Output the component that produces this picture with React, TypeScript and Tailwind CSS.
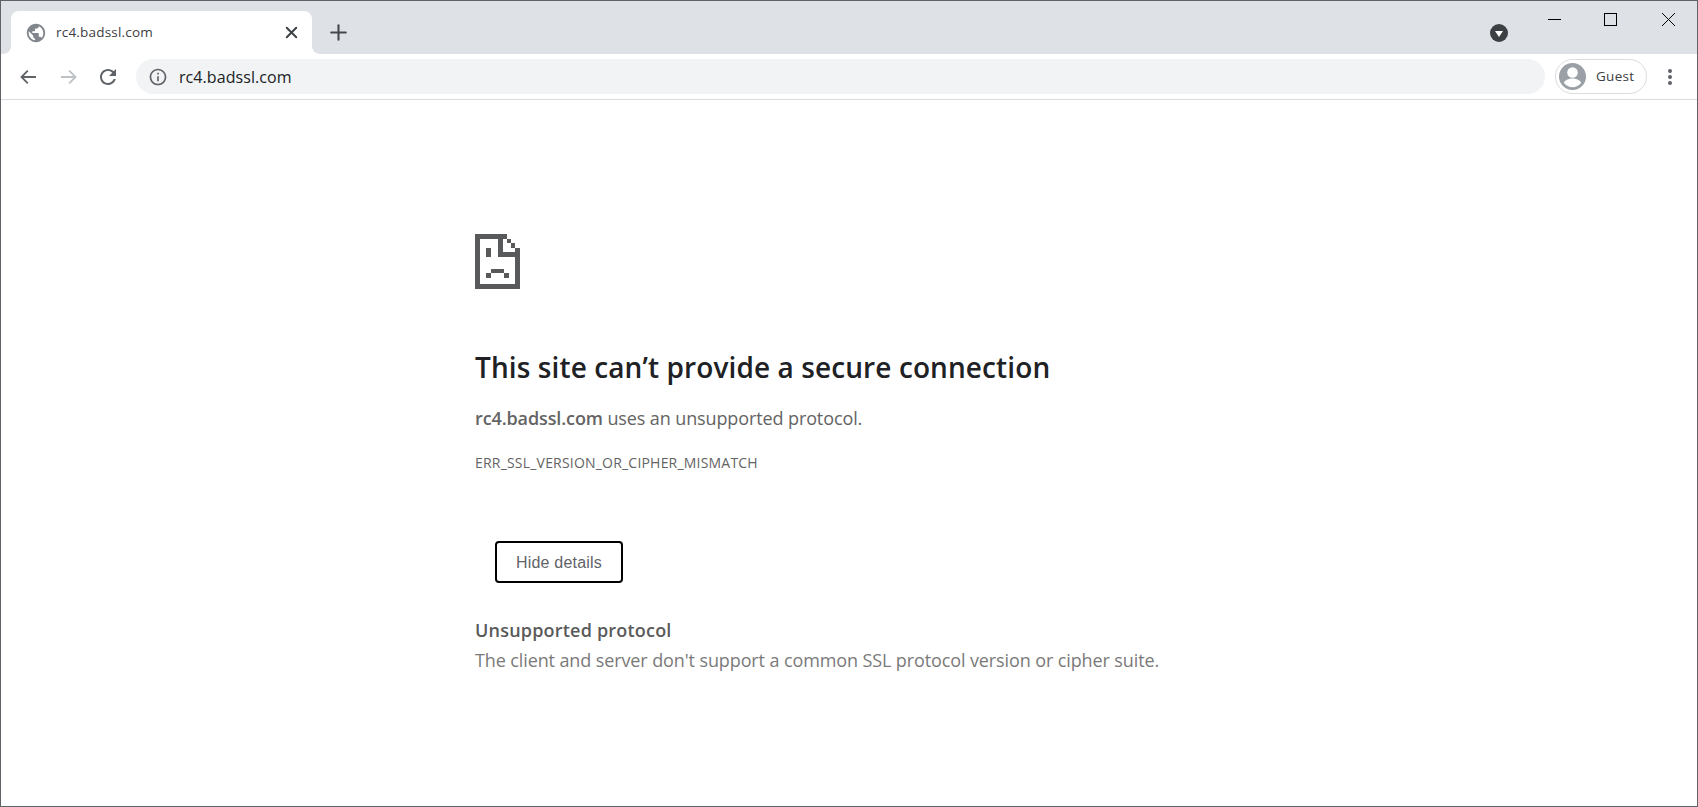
import { Plus, X } from "lucide-react";

const uiFont = "font-['Open_Sans','Noto_Sans',sans-serif]";

function GlobeIcon() {
  return (
    <svg width="22" height="22" viewBox="0 0 24 24" className="shrink-0">
      <path
        fill="#80868b"
        d="M12 2C6.48 2 2 6.48 2 12s4.48 10 10 10 10-4.48 10-10S17.52 2 12 2zm-1 17.93c-3.95-.49-7-3.85-7-7.93 0-.62.08-1.21.21-1.79L9 15v1c0 1.1.9 2 2 2v1.93zm6.9-2.54c-.26-.81-1-1.39-1.9-1.39h-1v-3c0-.55-.45-1-1-1H8v-2h2c.55 0 1-.45 1-1V7h2c1.1 0 2-.9 2-2v-.41c2.93 1.19 5 4.06 5 7.41 0 2.08-.8 3.97-2.1 5.39z"
      />
    </svg>
  );
}

function SadPage() {
  return (
    <svg width="45" height="55" viewBox="0 0 45 55" shapeRendering="crispEdges" fill="#58595b">
      <rect x="0" y="0" width="32" height="5" />
      <rect x="0" y="0" width="5" height="55" />
      <rect x="0" y="50" width="45" height="5" />
      <rect x="40" y="14" width="5" height="41" />
      <rect x="23" y="0" width="5" height="23" />
      <rect x="23" y="18" width="22" height="5" />
      <rect x="32" y="5" width="4" height="4" />
      <rect x="36" y="9" width="4" height="5" />
      <rect x="11" y="14" width="5" height="9" />
      <rect x="16" y="35" width="13" height="4" />
      <rect x="11" y="39" width="5" height="5" />
      <rect x="29" y="39" width="5" height="5" />
    </svg>
  );
}

function TabFlare({ side }: { side: "left" | "right" }) {
  return (
    <svg
      width="8"
      height="8"
      viewBox="0 0 8 8"
      className={side === "left" ? "absolute bottom-0 -left-[8px]" : "absolute bottom-0 -right-[8px]"}
    >
      <path d={side === "left" ? "M8 0v8H0c4.400 0 8-3.600 8-8z" : "M0 0v8h8C3.600 8 0 4.400 0 0z"} fill="#fff" />
    </svg>
  );
}

function TabStrip() {
  return (
    <div className="flex h-[53px] shrink-0 bg-[#dee1e6]">
      <div className="relative ml-[10px] mt-[10px] flex h-[43px] w-[301px] items-center rounded-t-[8px] bg-white pl-[14px] pr-[11px]">
        <TabFlare side="left" />
        <GlobeIcon />
        <span className={`ml-[9px] flex-1 text-[13.5px] tracking-[0.2px] text-[#3c4043] ${uiFont}`}>rc4.badssl.com</span>
        <X size={19} strokeWidth={2.4} className="text-[#3c4043]" />
        <TabFlare side="right" />
      </div>
      <div className="ml-[14px] mt-[10px] flex h-[43px] items-center">
        <Plus size={25} strokeWidth={2} className="text-[#45484b]" />
      </div>
      <div className="flex-1" />
      <div className="mt-[23px] flex h-[18px] w-[18px] items-center justify-center rounded-full bg-[#3c4043]">
        <div className="mt-[1px] h-0 w-0 border-x-[4px] border-t-[6px] border-x-transparent border-t-white" />
      </div>
      <div className="ml-[40px] flex h-[37px] items-center pr-[22px]">
        <div className="mt-[-1px] h-px w-[13px] bg-black" />
        <div className="ml-[43px] h-[13px] w-[13px] border border-black" />
        <svg width="13" height="13" viewBox="0 0 13 13" className="ml-[45px]">
          <path d="M0 0l13 13M13 0L0 13" stroke="#000" strokeWidth="1" fill="none" />
        </svg>
      </div>
    </div>
  );
}

function Toolbar() {
  return (
    <div className={`flex h-[46px] shrink-0 items-center border-b border-[#dadce0] pl-[17px] pr-[25px] ${uiFont}`}>
      <svg width="20" height="20" viewBox="0 0 20 20" fill="none" stroke="#5f6368" strokeWidth="1.8">
        <path d="M18 10H3.500M9.800 3.700L3.500 10l6.300 6.300" />
      </svg>
      <svg width="20" height="20" viewBox="0 0 20 20" fill="none" stroke="#bdc1c6" strokeWidth="1.8" className="ml-[21px]">
        <path d="M2 10h14.500M10.200 3.700L16.500 10l-6.300 6.300" />
      </svg>
      <svg width="24" height="24" viewBox="0 0 24 24" fill="#5f6368" className="ml-[17px]">
        <path d="M17.65 6.35C16.2 4.9 14.21 4 12 4c-4.42 0-7.99 3.58-7.99 8s3.57 8 7.99 8c3.73 0 6.84-2.55 7.73-6h-2.08c-.82 2.33-3.04 4-5.65 4-3.31 0-6-2.69-6-6s2.690-6 6-6c1.660 0 3.140.69 4.220 1.780L13 11h7V4l-2.350 2.350z" />
      </svg>
      <div className="ml-[16px] flex h-[35px] flex-1 items-center rounded-full bg-[#f1f3f4] pl-[12px]">
        <svg width="20" height="20" viewBox="0 0 24 24" fill="#5f6368">
          <path d="M11 7h2v2h-2zm0 4h2v6h-2zm1-9C6.480 2 2 6.480 2 12s4.480 10 10 10 10-4.480 10-10S17.520 2 12 2zm0 18c-4.410 0-8-3.590-8-8s3.590-8 8-8 8 3.590 8 8-3.590 8-8 8z" />
        </svg>
        <span className="ml-[11px] text-[16px] tracking-[0.07px] text-[#202124]">rc4.badssl.com</span>
      </div>
      <div className="ml-[10px] flex h-[35px] w-[92px] items-center rounded-full border border-[#dadce0] pl-[3px]">
        <svg width="27" height="27" viewBox="0 0 27 27" className="shrink-0">
          <circle cx="13.5" cy="13.5" r="13.500" fill="#9aa0a6" />
          <circle cx="13.5" cy="9.500" r="5.300" fill="#fff" />
          <path d="M5 20c0-2.800 5-4.600 8.500-4.600S22 17.200 22 20c-2 2.700-5 4.200-8.500 4.200S7 22.700 5 20z" fill="#fff" />
        </svg>
        <span className="ml-[10px] text-[13.5px] tracking-[0.3px] text-[#3c4043]">Guest</span>
      </div>
      <div className="ml-[21px] flex flex-col gap-[2px]">
        <div className="h-[4px] w-[4px] rounded-full bg-[#5f6368]" />
        <div className="h-[4px] w-[4px] rounded-full bg-[#5f6368]" />
        <div className="h-[4px] w-[4px] rounded-full bg-[#5f6368]" />
      </div>
    </div>
  );
}

function ErrorPage() {
  return (
    <main className={`flex-1 bg-white pl-[474px] pt-[134px] ${uiFont}`}>
      <SadPage />
      <h1 className="mt-[60px] text-[28px] leading-[36px] font-semibold tracking-[0.1px] text-[#202124]">
        This site can&rsquo;t provide a secure connection
      </h1>
      <p className="mt-[21px] text-[18px] leading-[24px] tracking-[-0.11px] text-[#646464]">
        <strong className="font-semibold">rc4.badssl.com</strong> uses an unsupported protocol.
      </p>
      <p className="mt-[24px] text-[14px] leading-[18px] tracking-[0.2px] text-[#646464]">
        ERR_SSL_VERSION_OR_CIPHER_MISMATCH
      </p>
      <button className="ml-[20px] mt-[69px] block h-[42px] w-[128px] rounded-[4px] border-2 border-black bg-white pt-[1px] font-['Liberation_Sans',sans-serif] text-[16px] tracking-[0.2px] text-[#5f6368]">
        Hide details
      </button>
      <h2 className="mt-[35px] text-[18px] leading-[24px] font-semibold tracking-[0.2px] text-[#5a5a5a]">
        Unsupported protocol
      </h2>
      <p className="mt-[5px] text-[18px] leading-[26px] tracking-[-0.11px] text-[#7a7a7a]">
        The client and server don&apos;t support a common SSL protocol version or cipher suite.
      </p>
    </main>
  );
}

export default function App() {
  return (
    <div className="flex h-[807px] w-[1698px] flex-col overflow-hidden border border-[#5f6368] bg-white">
      <TabStrip />
      <Toolbar />
      <ErrorPage />
    </div>
  );
}
